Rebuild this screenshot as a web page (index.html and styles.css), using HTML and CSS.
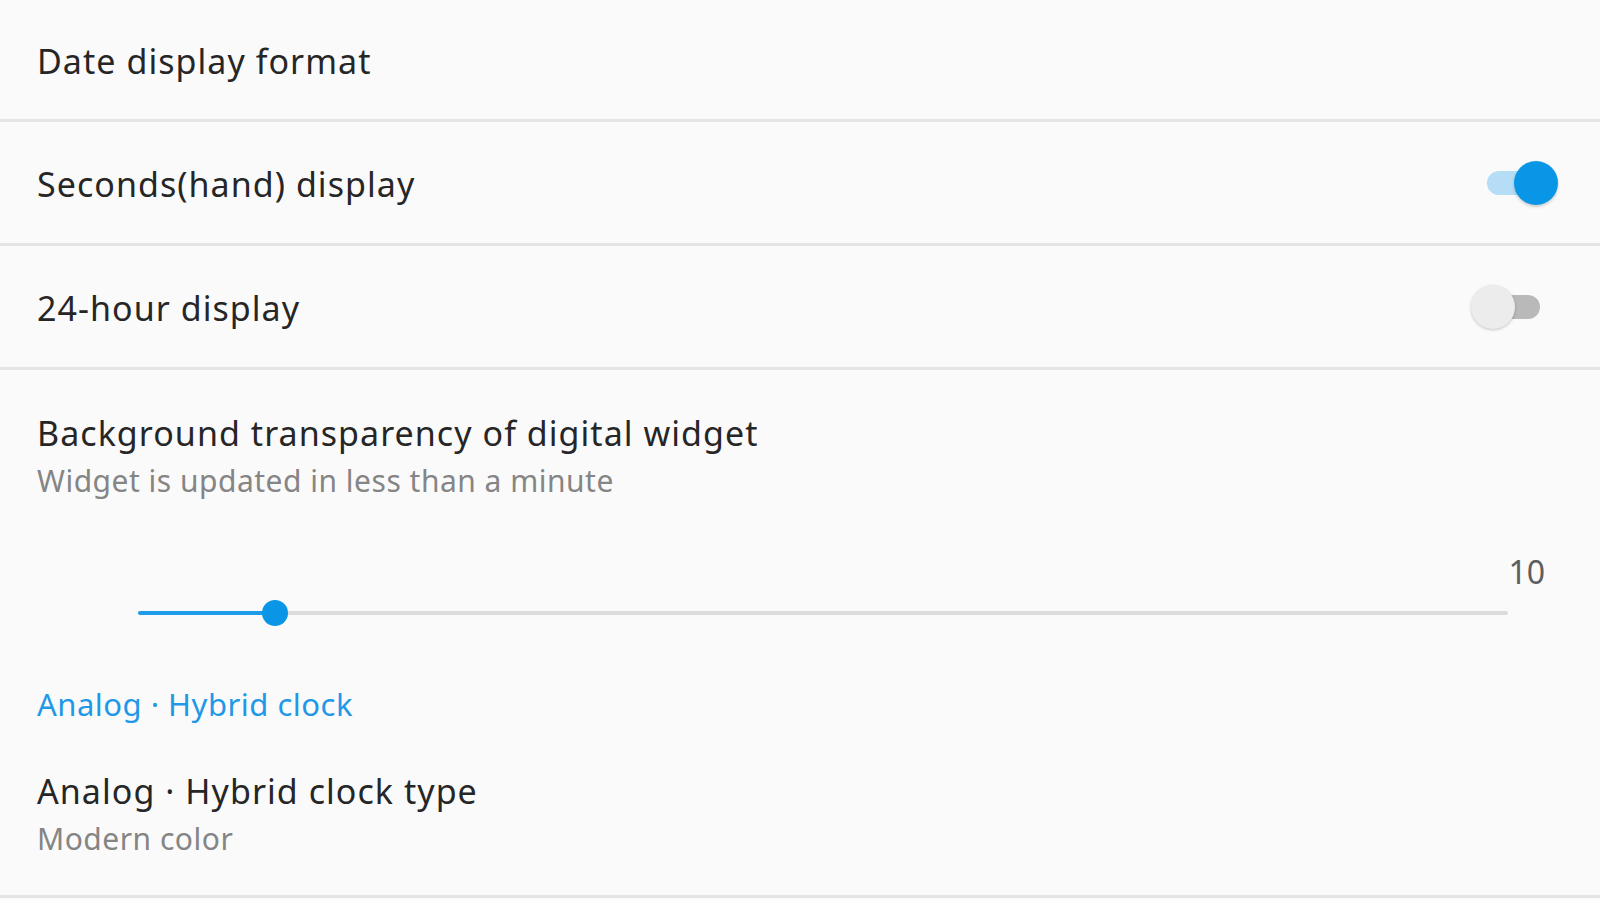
FILE: index.html
```html
<!DOCTYPE html>
<html lang="en">
<head>
<meta charset="utf-8">
<title>Clock settings</title>
<link rel="stylesheet" href="styles.css">
</head>
<body>
<main class="list">
  <div class="row row-first">
    <span class="title">Date display format</span>
  </div>
  <div class="row">
    <span class="title">Seconds(hand) display</span>
    <div class="switch on"><span class="track"></span><span class="thumb"></span></div>
  </div>
  <div class="row">
    <span class="title">24-hour display</span>
    <div class="switch off"><span class="track"></span><span class="thumb"></span></div>
  </div>
  <section class="section">
    <div class="title">Background transparency of digital widget</div>
    <div class="subtitle">Widget is updated in less than a minute</div>
    <div class="slider-value">10</div>
    <div class="slider">
      <div class="slider-rail"></div>
      <div class="slider-fill" style="width: 10%"></div>
      <div class="slider-thumb" style="left: 10%"></div>
    </div>
    <div class="category">Analog · Hybrid clock</div>
    <div class="item">
      <div class="title">Analog · Hybrid clock type</div>
      <div class="subtitle sub-tight">Modern color</div>
    </div>
  </section>
</main>
</body>
</html>
```

FILE: styles.css
```css
html, body {
  margin: 0;
  padding: 0;
  background: #fafafa;
}

body {
  font-family: "Noto Sans", "Open Sans", sans-serif;
  color: #252525;
  width: 1600px;
  height: 900px;
  overflow: hidden;
}

.list {
  display: flex;
  flex-direction: column;
}

.row {
  height: 121px;
  box-sizing: content-box;
  display: flex;
  align-items: center;
  justify-content: space-between;
  padding: 0 42px 0 37px;
  border-bottom: 3px solid #e4e4e4;
}

.row-first {
  height: 119px;
}

.row .title {
  position: relative;
  top: 2px;
}

.title {
  font-size: 34px;
  line-height: 40.8px;
  letter-spacing: 1.05px;
  color: #262626;
}

.subtitle {
  font-size: 30px;
  line-height: 36px;
  letter-spacing: 0.5px;
  color: #858585;
  margin-top: 9px;
}

.sub-tight {
  margin-top: 9px;
}

.switch {
  position: relative;
  width: 88px;
  height: 44px;
}

.switch .track {
  position: absolute;
  left: 17px;
  top: 10px;
  width: 53px;
  height: 24px;
  border-radius: 12px;
}

.switch .thumb {
  position: absolute;
  top: 0;
  width: 44px;
  height: 44px;
  border-radius: 50%;
}

.switch.on .track {
  background: #b5ddf6;
}

.switch.on .thumb {
  left: 44px;
  background: #0a96e6;
  box-shadow: 0 2px 3px rgba(0, 0, 0, 0.18);
}

.switch.off .track {
  background: #b9b9b9;
}

.switch.off .thumb {
  left: 1px;
  background: #ececec;
  box-shadow: 0 1px 3px rgba(0, 0, 0, 0.22);
}

.section {
  padding: 43px 0 38px 37px;
  border-bottom: 3px solid #e4e4e4;
}

.slider-value {
  margin-top: 54px;
  padding-right: 55px;
  text-align: right;
  font-size: 32px;
  line-height: 38px;
  color: #5e5e5e;
}

.slider {
  position: relative;
  height: 26px;
  margin: 9px 92px 0 101px;
}

.slider-rail {
  position: absolute;
  left: 0;
  right: 0;
  top: 11px;
  height: 4px;
  border-radius: 2px;
  background: #dcdcdc;
}

.slider-fill {
  position: absolute;
  left: 0;
  top: 11px;
  height: 4px;
  border-radius: 2px;
  background: #1e9be9;
}

.slider-thumb {
  position: absolute;
  top: 0;
  width: 26px;
  height: 26px;
  margin-left: -13px;
  border-radius: 50%;
  background: #0a96e6;
}

.category {
  margin-top: 60px;
  font-size: 31px;
  line-height: 36px;
  letter-spacing: 0.5px;
  color: #1f98e8;
}

.item {
  margin-top: 49px;
}
```
